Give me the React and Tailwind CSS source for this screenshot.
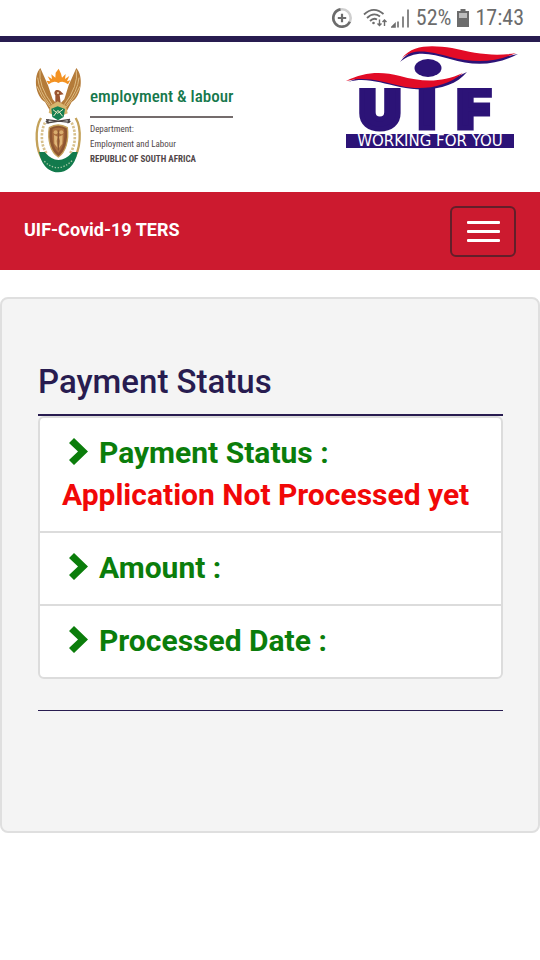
import React from "react";

function StatusBar() {
  return (
    <div className="flex h-9 items-center justify-end gap-1 pr-4 font-['Roboto_Condensed',Roboto,sans-serif] text-[22px] leading-9 text-[#6c6c6c]">
      <svg className="mr-[6px] h-[22px] w-[22px]" viewBox="0 0 22 22" fill="none" aria-hidden="true">
        <circle cx="11" cy="11" r="8.7" stroke="#cfcfcf" strokeWidth="2.6" />
        <path d="M9.5 2.4A8.7 8.7 0 1 0 18.8 14.8" stroke="#6c6c6c" strokeWidth="2.6" />
        <path d="M11 6.8v8.4M6.8 11h8.4" stroke="#6c6c6c" strokeWidth="2.2" />
      </svg>
      <svg className="h-5 w-6" viewBox="0 0 24 20" fill="none" stroke="#6c6c6c" strokeWidth="1.8" aria-hidden="true">
        <path d="M1 6.5Q10.500 -2.500 20.500 6M4 10Q10.500 3.500 17 8.500M7 13Q10.500 9.500 14 11.500" />
        <circle cx="10.500" cy="15" r="1.300" fill="#6c6c6c" stroke="none" />
        <path d="M16.500 11.500v6M14.500 15.500l2 2 2-2M21.500 18v-6M19.500 14l2-2 2 2" strokeWidth="1.400" />
      </svg>
      <svg className="h-[19px] w-[19px]" viewBox="0 0 19 19" fill="none" stroke="#6c6c6c" strokeWidth="1.6" aria-hidden="true">
        <path d="M1 18h3v-3zM7 18.500v-6M12 18.500v-11M17 18.500v-18" />
      </svg>
      <span className="ml-[2px]">52%</span>
      <svg className="mx-[2px] h-[18px] w-3" viewBox="0 0 12 18" aria-hidden="true">
        <path d="M3.500 0h5v2H12v16H0V2h3.500z" fill="#6c6c6c" />
        <path d="M2 4h8v5H2z" fill="#bdbdbd" />
      </svg>
      <span>17:43</span>
    </div>
  );
}

function CoatOfArms() {
  return (
    <svg className="h-[120px] w-[60px] shrink-0" viewBox="0 0 180 360" fill="none" role="img" aria-label="Coat of arms">
      <path d="M33 174C14 205 15 272 41 302Q84 356 127 302C153 272 156 205 137 174" stroke="#c3a159" strokeWidth="7" />
      <path d="M45 188C31 215 32 260 52 282M125 188C139 215 138 260 118 282" stroke="#d8c18e" strokeWidth="8" strokeDasharray="7 4" />
      <path d="M27 276C36 326 66 337 85 337C108 337 134 321 143 276L128 276Q85 324 44 276Z" fill="#127a4c" />
      <path d="M43 304Q84 343 126 302" stroke="#a8c9a6" strokeWidth="4" strokeDasharray="4 5" />
      <path d="M31 24C9 48 15 108 45 126L62 156L81 133L68 118L54 76Z" fill="#b47b39" />
      <path d="M139 24C161 48 156 108 125 126L109 156L89 133L103 118L116 76Z" fill="#b47b39" />
      <path d="M30 31Q24 77 67 134M23 53Q27 94 61 136M21 79Q32 110 61 142M139 31Q146 77 103 134M147 53Q143 94 109 136M150 79Q138 110 108 142" stroke="#dfbd83" strokeWidth="3" />
      <path d="M56 73L49 62L61 64L53 49L66 57L64 43L76 53L77 38L86 26L93 41L96 53L107 42L105 57L118 48L111 64L121 61L114 73Q99 60 85 69Q71 60 56 73Z" fill="#f39222" />
      <path d="M76 106C67 92 82 86 91 93L101 103L89 105L93 137L76 139Z" fill="#9a5430" />
      <circle cx="84" cy="99" r="3" fill="#f7d6aa" />
      <path d="M61 138L83 124L108 138L113 160L84 172L56 158Z" fill="#d7b56e" />
      <path d="M64 146L83 139L105 147L101 171L84 181L67 171Z" fill="#168052" />
      <path d="M69 149L83 160L99 148M71 168L84 151L98 169" stroke="#eee8c3" strokeWidth="3" />
      <path d="M48 179L119 187M49 189L120 178" stroke="#4d4544" strokeWidth="4" />
      <path d="M46 184l10-7v14zM123 184l-10-7v14z" fill="#4d4544" />
      <path d="M58 203Q84 187 112 203C117 242 107 276 85 291C62 276 52 241 58 203Z" fill="#8e5632" stroke="#c7a25c" strokeWidth="4" />
      <path d="M68 207Q84 199 102 207C106 238 98 266 85 278C70 264 64 238 68 207Z" fill="#ad7040" />
      <circle cx="77" cy="217" r="6" fill="#d9ad6e" />
      <circle cx="94" cy="217" r="6" fill="#d9ad6e" />
      <path d="M72 225L83 230L80 243L83 264L73 251ZM98 225L87 230L90 243L87 264L97 251Z" fill="#e0b678" />
      <path d="M85 211v60" stroke="#70452d" strokeWidth="2" />
    </svg>
  );
}

function UifLogo() {
  return (
    <svg className="h-[113px] w-[200px] shrink-0" viewBox="0 2 200 113" role="img" aria-label="UIF Working for you">
      <g fill="#2c1377" stroke="#2c1377" strokeWidth="5" fontFamily="Inter, 'DejaVu Sans', sans-serif" fontWeight="900" fontSize="58" textAnchor="middle">
        <text x="45" y="88">U</text>
        <text x="92" y="88">I</text>
        <text x="139" y="88">F</text>
      </g>
      <rect x="10" y="30" width="170" height="18" fill="#fff" />
      <path d="M65 22C78 5 98 5 117 10C139 16 158 20 183 14C160 26 138 26 115 19C94 13 79 10 65 22Z" fill="#2c1377" />
      <path d="M67 18C78 4 98 5 117 8C139 13 158 17 181 13C160 23 138 23 115 17C94 11 79 8 67 18Z" fill="#e20b26" />
      <ellipse cx="93" cy="28" rx="13.500" ry="9" fill="#2c1377" />
      <path d="M13 42C31 34 45 34 63 39C90 47 113 42 132 32C119 48 93 53 65 47C45 43 31 37 13 42Z" fill="#2c1377" />
      <path d="M11 41C29 32 46 31 65 36C87 42 106 43 128 33C111 47 88 51 66 46C45 41 30 36 11 41Z" fill="#e20b26" />
      <rect x="11" y="94" width="168" height="14" fill="#2c1377" />
      <text x="95" y="106" textAnchor="middle" fill="#fff" fontFamily="'DejaVu Sans', sans-serif" fontSize="15">WORKING FOR YOU</text>
    </svg>
  );
}

function Header() {
  return (
    <header className="flex h-[156px] items-start justify-between border-t-[6px] border-[#281c50] bg-white pr-[5px] pl-[30px]">
      <div className="flex pt-[18px]">
        <CoatOfArms />
        <div className="pt-5 font-['Roboto_Condensed',Roboto,sans-serif] text-[9px] leading-[15px] whitespace-nowrap text-[#514749]">
          <p className="border-b-2 border-[#746c6c] pb-1 text-[17px] leading-8 font-medium text-[#16784c]">employment &amp; labour</p>
          <p className="pt-1">Department:</p>
          <p>Employment and Labour</p>
          <p className="font-bold">REPUBLIC OF SOUTH AFRICA</p>
        </div>
      </div>
      <UifLogo />
    </header>
  );
}

function NavBar() {
  return (
    <nav className="flex h-[78px] items-center justify-between bg-[#cc1a2f] px-6">
      <a href="#" className="pb-[2px] text-lg font-bold text-white">UIF-Covid-19 TERS</a>
      <button type="button" aria-label="Toggle navigation" className="flex h-[51px] w-[66px] flex-col items-center justify-center gap-[6px] rounded-md border-2 border-[#621f2a]">
        <span className="h-[3px] w-[33px] rounded-[1px] bg-white" />
        <span className="h-[3px] w-[33px] rounded-[1px] bg-white" />
        <span className="h-[3px] w-[33px] rounded-[1px] bg-white" />
      </button>
    </nav>
  );
}

function StatusItem({ label, value }) {
  return (
    <li className="px-[22px] pt-[14px] pb-[15px]">
      <div className="flex items-center pl-[7px] text-[#0b7d0b]">
        <svg className="mr-[11px] mb-1 h-[27px] w-[19px]" viewBox="0 0 19 27" fill="currentColor" aria-hidden="true">
          <path d="M5 0L19 13.500L5 27L0 22L9 13.500L0 5Z" />
        </svg>
        <span>{label} :</span>
      </div>
      {value && <p className="text-[#f10808]">{value}</p>}
    </li>
  );
}

export default function App() {
  return (
    <div className="min-h-screen bg-white font-[Roboto,sans-serif]">
      <StatusBar />
      <Header />
      <NavBar />
      <main className="mt-[27px] rounded-lg border-2 border-[#dfdfdf] bg-[#f4f4f4] pt-[60px] pr-[35px] pb-[120px] pl-9">
        <h1 className="border-b-2 border-[#281c50] pb-[9px] text-[33px] leading-[46px] font-medium text-[#281c50]">Payment Status</h1>
        <ul className="divide-y-2 divide-[#dcdcdc] rounded-md border-2 border-[#dcdcdc] bg-white text-3xl leading-[42px] font-bold">
          <StatusItem label="Payment Status" value="Application Not Processed yet" />
          <StatusItem label="Amount" />
          <StatusItem label="Processed Date" />
        </ul>
        <hr className="mt-[31px] border-[#281c50]" />
      </main>
    </div>
  );
}
